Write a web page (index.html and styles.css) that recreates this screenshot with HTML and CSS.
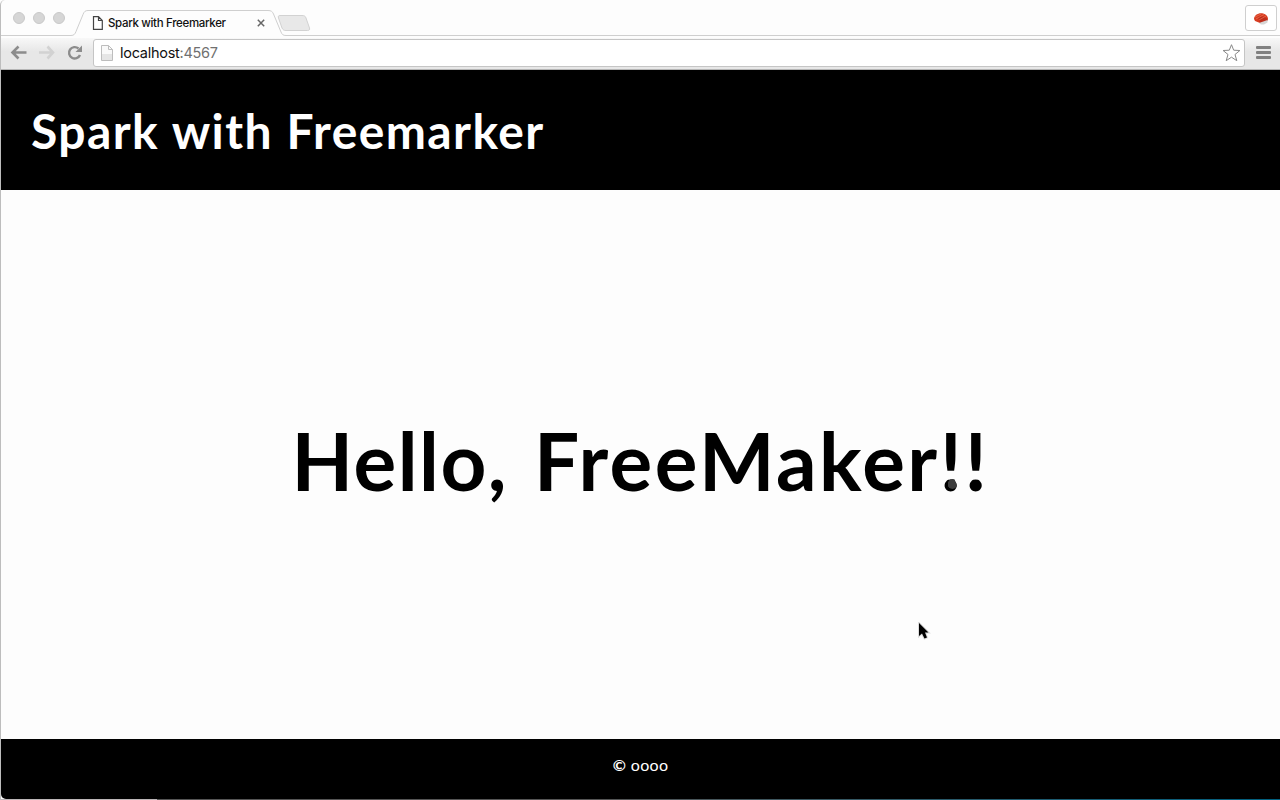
FILE: index.html
```html
<!DOCTYPE html>
<html lang="en">
<head>
<meta charset="utf-8">
<title>Spark with Freemarker</title>
<link rel="stylesheet" href="styles.css">
</head>
<body>
<div class="window">
  <div class="tabstrip">
    <svg class="tab-shape" width="1280" height="38" viewBox="0 0 1280 38">
      <path d="M1 35.500H71C74 35.500 75 34 76 31.500L83 14.500C84 11.500 85.500 10.500 88 10.500H268C271 10.500 272.500 11.500 273.500 14L281 32C282 34.500 283 35.500 286 35.500H1280V38H1Z" fill="#fdfdfd"/>
      <path d="M1 35.500H71C74 35.500 75 34 76 31.500L83 14.500C84 11.500 85.500 10.500 88 10.500H268C271 10.500 272.500 11.500 273.500 14L281 32C282 34.500 283 35.500 286 35.500H1280" fill="none" stroke="#cfcfcf"/>
      <path d="M280 15.500H302C304 15.500 305.500 16 306 18L309.500 28C310 30 309 30.500 307.500 30.500H286C284 30.500 283 30 282 28L278.500 18C278 16 278.500 15.500 280 15.500Z" fill="#e8e8e8" stroke="#d2d2d2"/>
    </svg>
    <div class="lights"><i></i><i></i><i></i></div>
    <div class="tab">
      <svg width="11" height="14" viewBox="0 0 11 14"><path d="M1.500 .7H6.500L10.300 4.500V13.300H1.500ZM6.500 .7V4.500H10.300" fill="#fff" stroke="#444" stroke-width="1.200"/></svg>
      <span class="tab-title">Spark with Freemarker</span>
      <svg width="8" height="8" viewBox="0 0 8 8"><path d="M.8 .8L7.200 7.200M7.200 .8L.8 7.200" stroke="#666" stroke-width="1.500"/></svg>
    </div>
    <div class="profile">
      <svg width="16" height="13" viewBox="0 0 16 13"><path d="M1 7C1 3 5 .8 9 1.200C12.500 1.600 15 4 15 7L13 10L7 11L2 9Z" fill="#d83c21"/><path d="M5 5C8 3 13 5 15 8L12 11L7 11Z" fill="#be2d1b"/><path d="M2 5L8 2M3 7L11 2.500M6 8L13 4" stroke="#ed7555" stroke-width=".7"/><path d="M6 11L14.500 8V10.500L11 12.500H8Z" fill="#d6d6d6"/></svg>
    </div>
  </div>
  <div class="toolbar">
    <svg class="nav" width="92" height="32" viewBox="0 0 92 32" fill="none">
      <path d="M25.500 15.500H12M17.500 9.500L11.500 15.500L17.500 21.500" stroke="#8c8c8c" stroke-width="2.600"/>
      <path d="M38 15.500H51M46.500 9.500L52 15.500L46.500 21.500" stroke="#d2d2d2" stroke-width="2.600"/>
      <path d="M79 18A5.700 5.700 0 1 1 77.500 11.500" stroke="#8c8c8c" stroke-width="2.400"/>
      <path d="M81 8.500V15H74.500Z" fill="#8c8c8c"/>
    </svg>
    <div class="address">
      <svg width="12" height="16" viewBox="0 0 12 16"><path d="M.5 .5H7.500L11.500 4.500V15.500H.5Z" fill="#f9f9f9" stroke="#bdbdbd"/><path d="M1 9H11V15H1Z" fill="#e5e5e5"/><path d="M7.500 .5V4.500H11.500" fill="none" stroke="#bdbdbd"/></svg>
      <span class="url">localhost<span class="port">:4567</span></span>
      <svg class="star" width="19" height="18" viewBox="0 0 19 18"><path d="M9.500 .7L11.700 6.200L17.900 6.500L13 10.500L14.800 16.700L9.500 13.200L4.200 16.700L6 10.500L1.100 6.500L7.300 6.200Z" fill="#fff" stroke="#888"/></svg>
    </div>
    <div class="menu"><i></i><i></i><i></i></div>
  </div>
  <header class="header"><h1>Spark with Freemarker</h1></header>
  <main class="main"><p class="hello"><span class="greeting">Hello,</span> FreeMaker!!</p></main>
  <footer class="footer"><span class="copy">©</span><span class="owner">oooo</span></footer>
  <div class="edge"></div>
</div>
<svg class="smudge" width="12" height="13" viewBox="0 0 12 13"><path d="M3 1H7.500L10 8L7 12H4L1 9V4Z" fill="#3c3c3c"/></svg>
<svg class="cursor" width="14" height="20" viewBox="0 0 14 20"><path d="M1 1V14L4 11.500L6.500 16.500L9 15.500L7 10.500H10.500Z" fill="#000" stroke="#dcdcdc" stroke-width="2" paint-order="stroke"/></svg>
</body>
</html>
```
FILE: styles.css
```css
* { box-sizing: border-box; }
body { margin: 0; width: 1280px; height: 800px; overflow: hidden; background: #fdfdfd; font-family: Lato, sans-serif; }
svg { display: block; flex: none; }
.window { height: 800px; border-left: 1px solid #bdbdbd; border-top-left-radius: 5px; display: flex; flex-direction: column; }
.tabstrip { position: relative; height: 37px; flex: none; display: flex; }
.tab-shape { position: absolute; left: -1px; top: 0; }
.lights { position: relative; display: flex; gap: 8px; padding: 12px 0 0 12px; width: 91px; }
.lights i { width: 12px; height: 12px; border-radius: 50%; background: #d6d6d6; border: 1px solid #c9c9c9; }
.tab { position: relative; display: flex; align-items: center; width: 173px; height: 26px; margin-top: 10px; }
.tab-title { font: 500 11.500px Inter, sans-serif; color: #111; margin-left: 5px; width: 149px; white-space: nowrap; letter-spacing: -.33px; }
.profile { position: relative; width: 32px; height: 26px; margin: 5px 3px 0 auto; border: 1px solid #cfcfcf; border-radius: 3px; display: flex; align-items: center; justify-content: center; background: #fff; }
.toolbar { height: 33px; flex: none; display: flex; background: linear-gradient(#f9f9f9, #e7e7e7 45%); border-bottom: 1px solid #b5b5b5; }
.address { width: 1152px; height: 28px; margin-top: 2px; border: 1px solid #c5c5c5; border-radius: 3px; background: #fff; display: flex; align-items: center; padding: 0 3px 0 7px; }
.url { margin-left: 7px; font: 14.500px/26px Inter, sans-serif; color: #111; letter-spacing: -.27px; }
.port { color: #707070; }
.star { margin-left: auto; }
.menu { display: flex; flex-direction: column; gap: 2px; margin: 9px 0 0 11px; }
.menu i { width: 15px; height: 3px; background: #808080; border-radius: 1px; }
.header { height: 120px; flex: none; background: #000; color: #fff; display: flex; align-items: center; padding: 2px 0 0 30px; }
h1 { margin: 0; font-size: 48px; line-height: 60px; font-weight: 700; letter-spacing: 1.400px; word-spacing: .5px; white-space: nowrap; }
.main { height: 549px; flex: none; display: flex; align-items: center; justify-content: center; padding-bottom: 10px; }
.hello { margin: 0; font-size: 80px; line-height: 100px; font-weight: 700; color: #000; white-space: nowrap; letter-spacing: 2.450px; word-spacing: 4px; }
.greeting { letter-spacing: 1.500px; }
.footer { height: 60px; flex: none; background: #000; color: #fff; display: flex; justify-content: center; font-size: 16px; line-height: 20px; padding-top: 16px; border-bottom-left-radius: 5px; }
.copy { font-weight: 700; margin-right: 5px; }
.owner { letter-spacing: .3px; }
.edge { height: 1px; flex: none; background: linear-gradient(90deg, #bcb6b8 0 156px, #555 156px 600px, #006080); }
.smudge { position: absolute; left: 947px; top: 478px; clip-path: circle(5px at 5.500px 6px); }
.cursor { position: absolute; left: 918px; top: 622px; }
```
